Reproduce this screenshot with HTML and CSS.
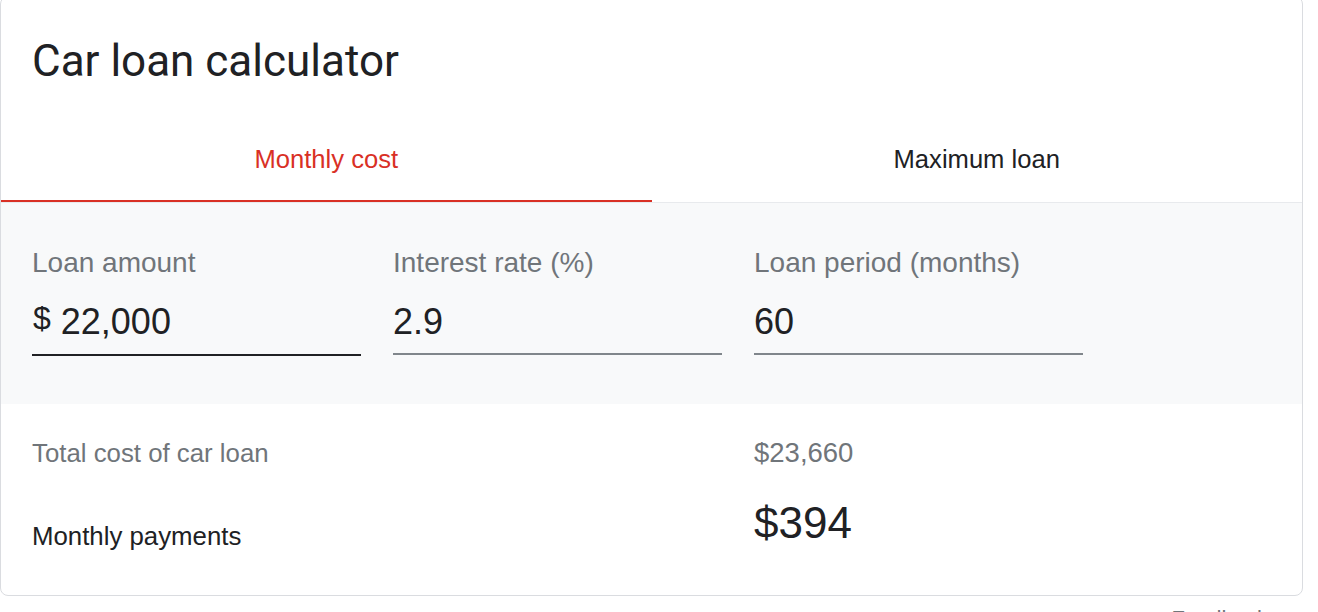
FILE: index.html
```html
<!DOCTYPE html>
<html lang="en">
<head>
<meta charset="utf-8">
<title>Car loan calculator</title>
<link rel="stylesheet" href="styles.css">
</head>
<body>
<div class="page">
  <div class="card">
    <div class="card-head">
      <h1 class="title">Car loan calculator</h1>
    </div>
    <div class="tabs">
      <div class="tab tab-active">Monthly cost</div>
      <div class="tab">Maximum loan</div>
    </div>
    <div class="inputs">
      <div class="field">
        <div class="field-label">Loan amount</div>
        <div class="field-value field-value-focus"><span class="currency">$</span> 22,000</div>
      </div>
      <div class="field">
        <div class="field-label">Interest rate (%)</div>
        <div class="field-value">2.9</div>
      </div>
      <div class="field">
        <div class="field-label">Loan period (months)</div>
        <div class="field-value">60</div>
      </div>
    </div>
    <div class="results">
      <div class="result-row">
        <div class="result-label muted">Total cost of car loan</div>
        <div class="result-value muted">$23,660</div>
      </div>
      <div class="result-row result-row-main">
        <div class="result-label">Monthly payments</div>
        <div class="result-value result-big">$394</div>
      </div>
    </div>
  </div>
  <div class="feedback-row">
    <span class="feedback">Feedback</span>
  </div>
</div>
</body>
</html>
```

FILE: styles.css
```css
html, body {
  margin: 0;
  padding: 0;
  background: #ffffff;
  overflow: hidden;
}

body {
  font-family: "Liberation Sans", Arial, sans-serif;
  color: #202124;
}

.page {
  width: 1303px;
}

.card {
  margin-top: -4px;
  border: 1px solid #dadce0;
  border-radius: 8px;
  background: #ffffff;
  overflow: hidden;
}

.card-head {
  padding: 38px 0 33px 31px;
}

.title {
  margin: 0;
  font-family: Roboto, "Noto Sans", sans-serif;
  font-weight: 400;
  font-size: 44px;
  line-height: 52px;
  color: #202124;
}

.tabs {
  display: flex;
  border-bottom: 1px solid #e8eaed;
}

.tab {
  flex: 1 1 0;
  text-align: center;
  font-size: 25.6px;
  line-height: 30px;
  padding: 24px 0 26px;
  border-bottom: 2px solid transparent;
  color: #202124;
}

.tab-active {
  color: #d93025;
  border-bottom-color: #d93025;
}

.inputs {
  background: #f8f9fa;
  display: flex;
  gap: 32px;
  padding: 45px 31px 48px;
}

.field {
  width: 329px;
}

.field-label {
  font-size: 28px;
  line-height: 30px;
  color: #70757a;
  margin-bottom: 23px;
  white-space: nowrap;
}

.field-value {
  font-size: 36px;
  line-height: 40px;
  color: #202124;
  padding-top: 1px;
  padding-bottom: 11px;
  border-bottom: 2px solid #80868b;
}

.field-value-focus {
  border-bottom-color: #202124;
}

.currency {
  font-size: 32px;
  position: relative;
  top: -5px;
  margin-left: 1px;
}

.results {
  padding: 34px 31px 44px;
  display: flex;
  flex-direction: column;
  gap: 31px;
}

.result-row {
  display: grid;
  grid-template-columns: 722px 1fr;
  align-items: end;
}

.result-label {
  font-size: 25.8px;
  line-height: 30px;
  color: #202124;
}

.result-value {
  font-size: 27.5px;
  line-height: 30px;
}

.result-big {
  font-size: 44px;
  line-height: 52px;
  color: #202124;
  position: relative;
  top: -2px;
}

.muted {
  color: #70757a;
}

.feedback-row {
  display: flex;
  justify-content: flex-end;
  padding-right: 35px;
  margin-top: 10px;
}

.feedback {
  font-size: 22px;
  line-height: 26px;
  color: #70757a;
}
```
